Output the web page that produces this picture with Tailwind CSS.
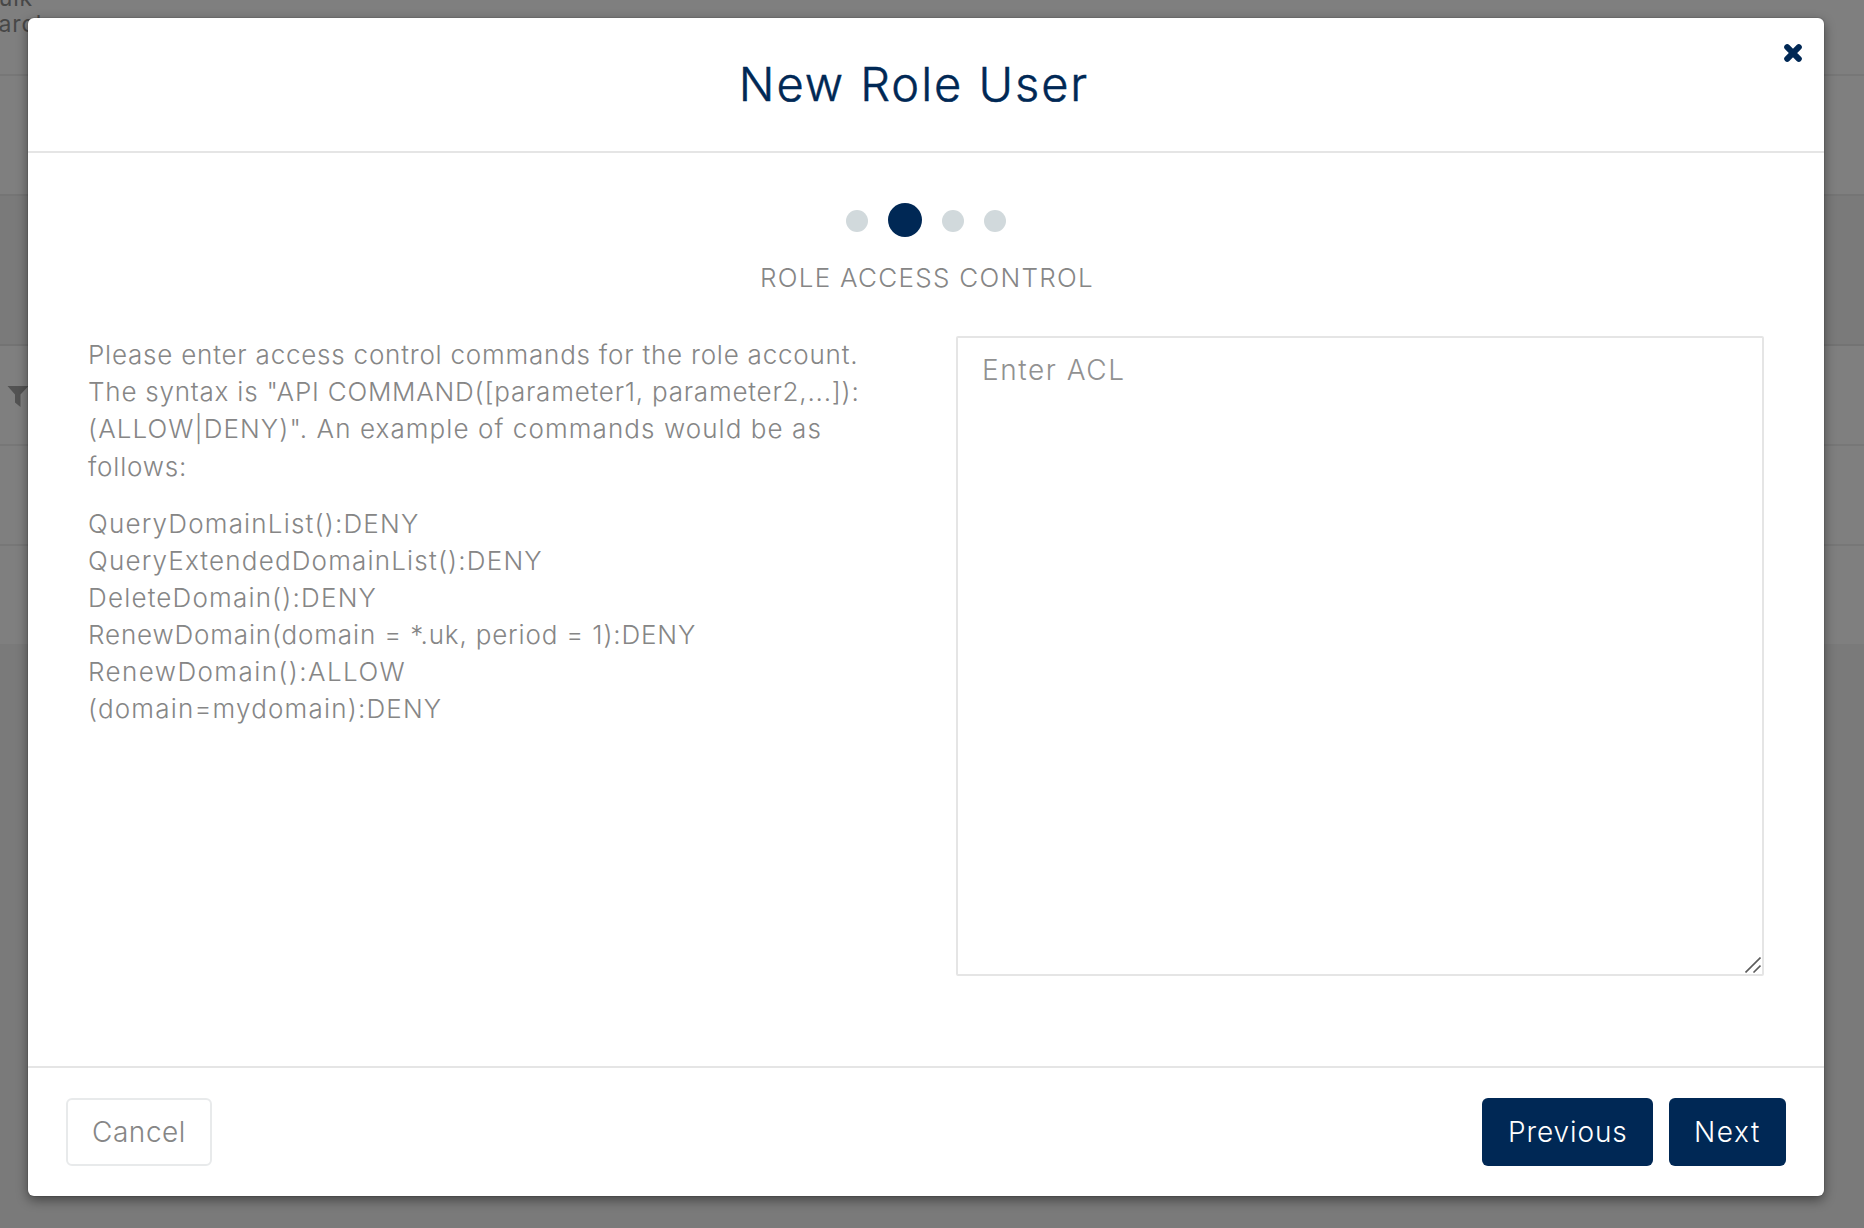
<!DOCTYPE html>
<html lang="en">
<head>
  <meta charset="UTF-8">
  <title>New Role User</title>
  <meta name="viewport" content="width=device-width, initial-scale=1.0">
  <script src="https://cdn.jsdelivr.net/npm/@tailwindcss/browser@4"></script>
</head>
<body class="relative h-screen overflow-hidden bg-[#f4f4f4] font-['Inter',sans-serif]">

  <!-- Page behind the modal -->
  <main class="flex flex-col">
    <div class="h-[76px] bg-white border-b-2 border-[#efefef] text-[23px] leading-[26px] text-[#8f8f8f] overflow-hidden">
      <p class="-ml-[17px] -mt-[15px] tracking-[0.8px]">Bulk</p>
      <p class="-ml-[32px] tracking-[1px]">Search</p>
    </div>
    <div class="h-[120px] bg-white border-b-2 border-[#eaeaea]"></div>
    <div class="h-[150px] bg-[#f4f4f4] border-b-2 border-[#e6e6e6]"></div>
    <div class="h-[100px] bg-white border-b-2 border-[#efefef] pl-[7px] pt-[40px]">
      <svg class="w-[22px] h-[22px]" viewBox="0 0 22 22" fill="#a6a6a6"><path d="M0.5 0H21.5L13.5 8.5V21L8 16.5V8.5Z"/></svg>
    </div>
    <div class="h-[100px] bg-white border-b-2 border-[#efefef]"></div>
    <div class="h-[98px] bg-white"></div>
  </main>

  <!-- Modal -->
  <div class="absolute inset-0 bg-black/50 pt-[18px] pl-[28px]">
    <div class="w-[1796px] h-[1178px] flex flex-col bg-white rounded-[6px] shadow-[0_0_0_1px_rgba(0,0,0,0.08),0_4px_12px_rgba(0,0,0,0.45)]">

      <!-- Header -->
      <header class="relative h-[135px] shrink-0 flex items-center justify-center pr-[24px] border-b-2 border-[#e5e5e5]">
        <h1 class="text-[47px] font-light tracking-[1.95px] text-[#002855] [-webkit-text-stroke:0.5px_#002855]">New Role User</h1>
        <button class="absolute right-[21px] top-[25px]" aria-label="Close">
          <svg class="w-[20px] h-[20px] block" viewBox="0 0 20 20" stroke="#002855" stroke-width="6" stroke-linecap="round"><path d="M4.2 4.2L15.8 15.8M15.8 4.2L4.2 15.8"/></svg>
        </button>
      </header>

      <!-- Body -->
      <div class="flex-1 px-[60px] pt-[50px] text-[26px] font-light leading-[37.14px] text-[#868686]">
        <div class="flex items-center justify-center gap-5 h-[34px]">
          <span class="w-[22px] h-[22px] mt-px rounded-full bg-[#d1d9dc]"></span>
          <span class="w-[34px] h-[34px] rounded-full bg-[#002855]"></span>
          <span class="w-[22px] h-[22px] mt-px rounded-full bg-[#d1d9dc]"></span>
          <span class="w-[22px] h-[22px] mt-px rounded-full bg-[#d1d9dc]"></span>
        </div>
        <h2 class="mt-[22px] pl-[2px] text-center tracking-[1.27px]">ROLE ACCESS CONTROL</h2>

        <div class="grid grid-cols-2 gap-[60px] mt-[40px]">
          <div class="whitespace-nowrap">
            <p class="tracking-[0.78px]">
              Please enter access control commands for the role account.<br>
              The syntax is "API COMMAND([parameter1, parameter2,...]):<br>
              <span class="tracking-[1.08px]">(ALLOW|DENY)". An example of commands would be as</span><br>
              follows:
            </p>
            <p class="mt-5 tracking-[1.18px]">
              QueryDomainList():DENY<br>
              QueryExtendedDomainList():DENY<br>
              DeleteDomain():DENY<br>
              <span class="tracking-[0.84px]">RenewDomain(domain = *.uk, period = 1):DENY</span><br>
              <span class="tracking-[1.42px]">RenewDomain():ALLOW</span><br>
              (domain=mydomain):DENY
            </p>
          </div>
          <div class="relative h-[640px]">
            <textarea placeholder="Enter ACL" class="block w-full h-full resize-none border-2 border-[#e5e5e5] rounded-[2px] pl-[24px] pt-[12px] text-[28px] leading-[40px] tracking-[1.55px] placeholder:text-[#919191]"></textarea>
            <svg class="absolute right-[3px] bottom-[3px] w-[16px] h-[16px]" viewBox="0 0 16 16" stroke="#5c5c5c" stroke-width="1.6"><path d="M0.5 15.5L15.5 0.5M8.5 15.5L15.5 8.5"/></svg>
          </div>
        </div>
      </div>

      <!-- Footer -->
      <footer class="h-[130px] shrink-0 flex items-center px-[38px] border-t-2 border-[#e5e5e5] text-[28px] font-light">
        <button class="w-[146px] h-[68px] pl-[24px] text-left border-2 border-[#e8eaeb] rounded-[6px] tracking-[0.55px] text-[#868686]">Cancel</button>
        <button class="ml-auto w-[171px] h-[68px] pl-[26px] text-left bg-[#002855] rounded-[6px] tracking-[0.9px] text-white">Previous</button>
        <button class="ml-4 w-[117px] h-[68px] pl-[25px] text-left bg-[#002855] rounded-[6px] tracking-[1.6px] text-white">Next</button>
      </footer>
    </div>
  </div>

</body>
</html>
